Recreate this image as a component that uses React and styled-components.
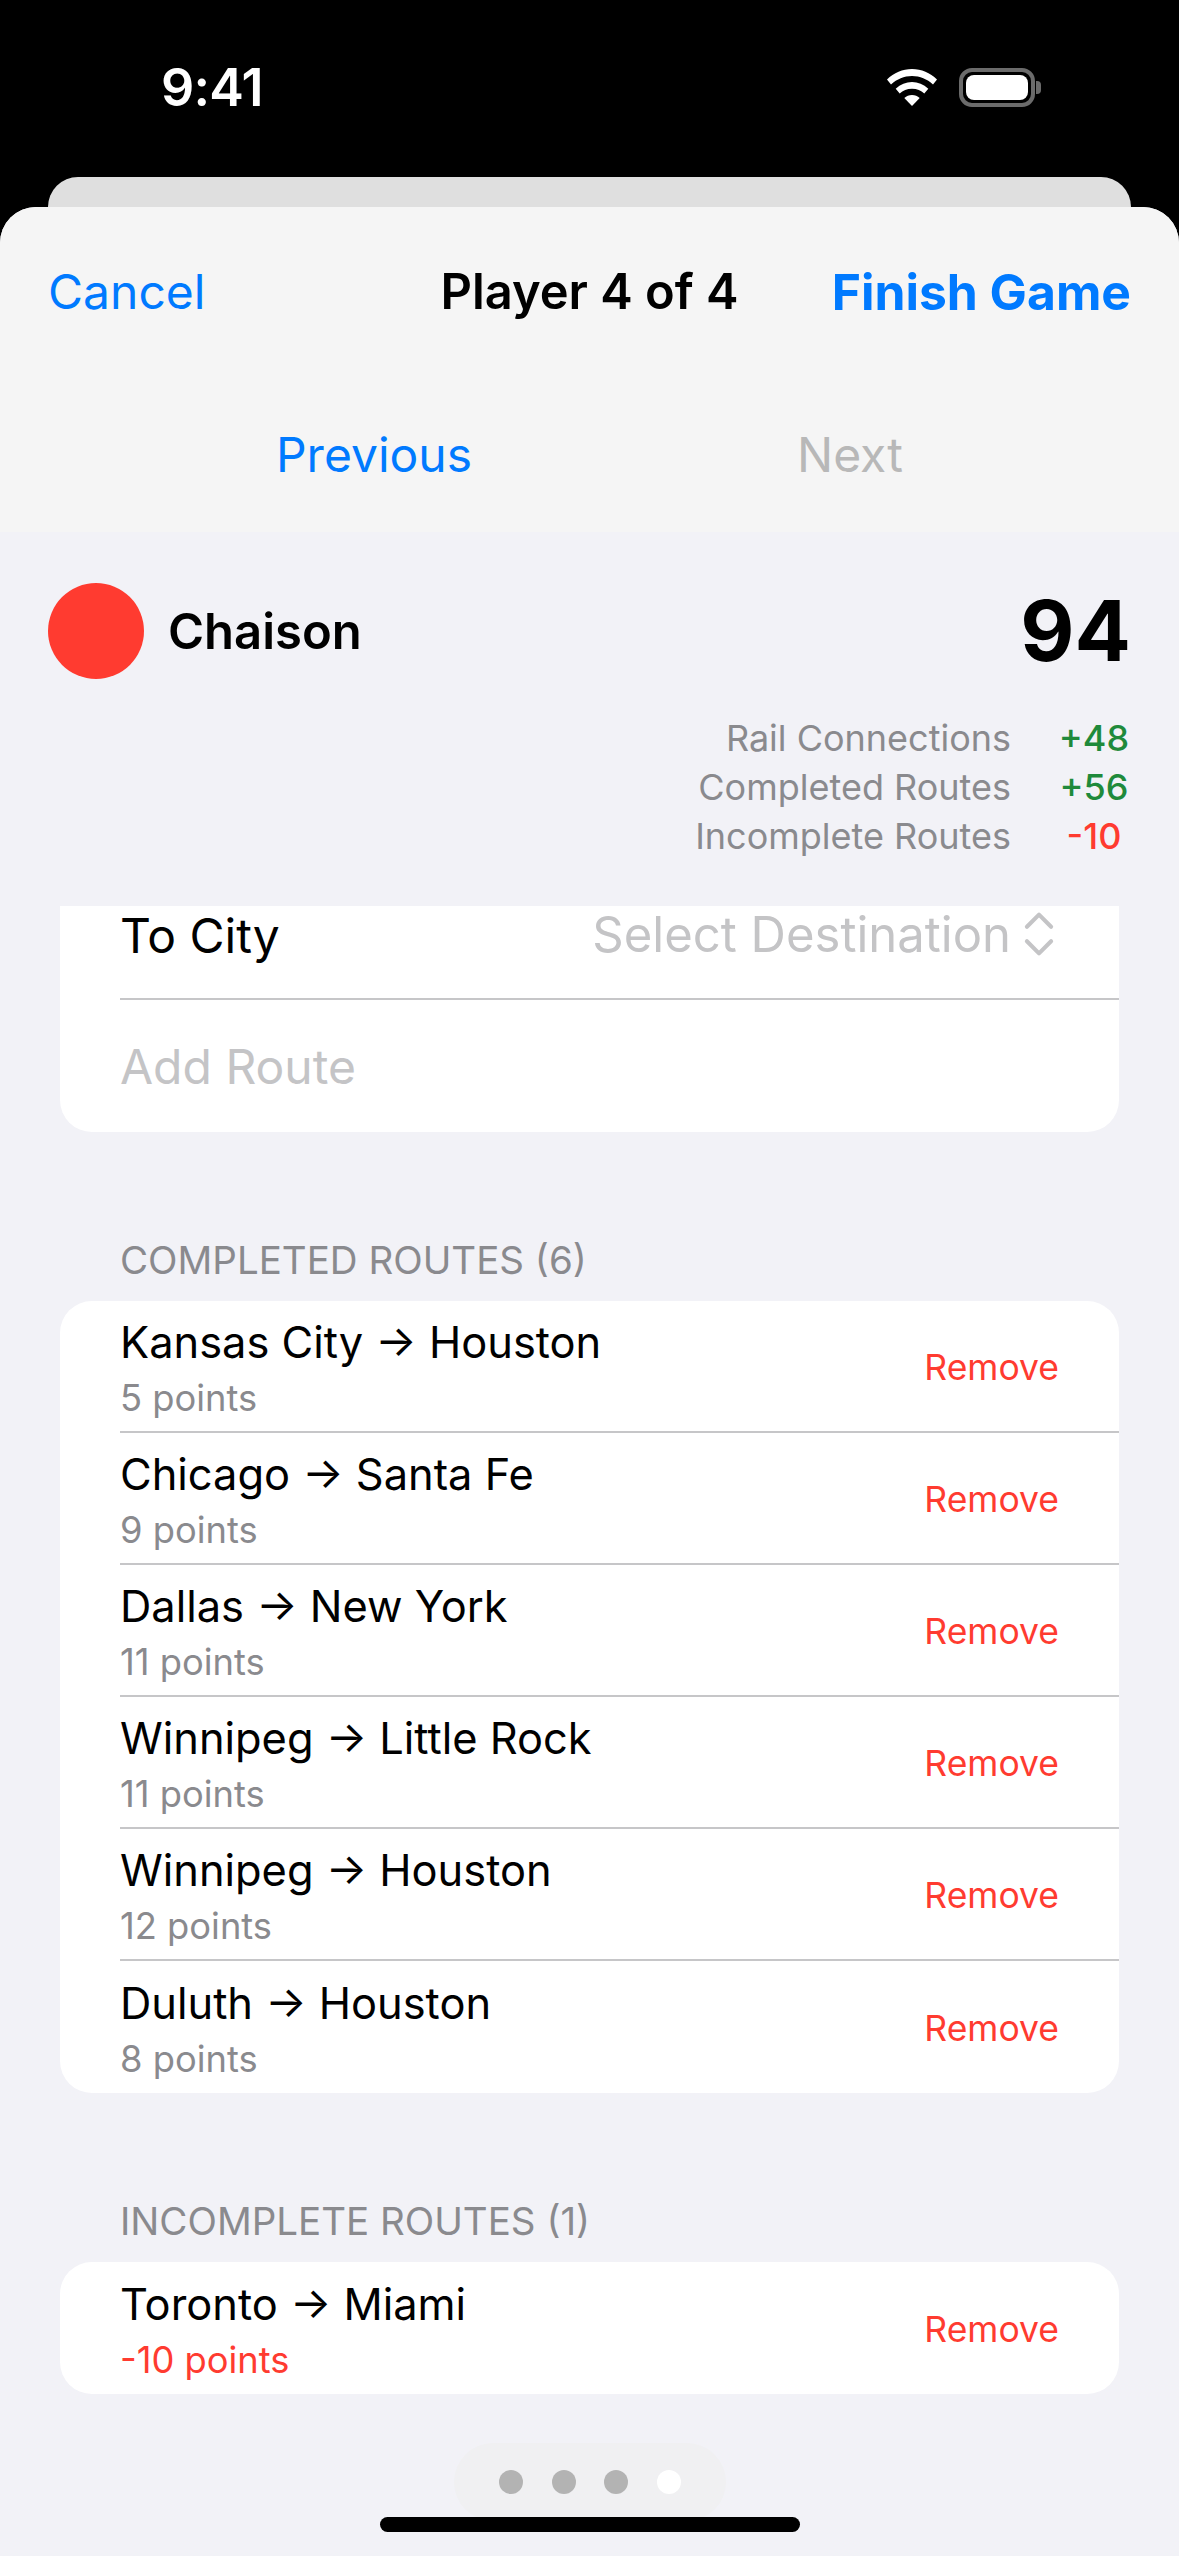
import styled, { createGlobalStyle } from "styled-components";
import { ChevronsUpDown } from "lucide-react";

const completedRoutes = [
  { name: "Kansas City → Houston", points: "5 points" },
  { name: "Chicago → Santa Fe", points: "9 points" },
  { name: "Dallas → New York", points: "11 points" },
  { name: "Winnipeg → Little Rock", points: "11 points" },
  { name: "Winnipeg → Houston", points: "12 points" },
  { name: "Duluth → Houston", points: "8 points" },
];

const scoreLines = [
  { label: "Rail Connections", value: "+48", tone: "#1f8a3b" },
  { label: "Completed Routes", value: "+56", tone: "#1f8a3b" },
  { label: "Incomplete Routes", value: "-10", tone: "#ff3b30" },
];

const App = () => {
  return (
    <>
      <GlobalStyle />
      <Screen>
        <StatusBar>
          <Time>9:41</Time>
          <StatusIcons>
            <svg width="50" height="37" viewBox="0 0 50 37">
              <path fill="#fff" d="M25 0C15.500 0 7 3.600 0 10.500L4 15.500C10 10 17 7 25 7C33 7 40 10 46 15.500L50 10.500C43 3.600 34.500 0 25 0Z" />
              <path fill="#fff" d="M25 13C19 13 13.500 15.300 8.700 19.800L12.700 24.500C16 21.500 20 19.800 25 19.800C30 19.800 34 21.500 37.300 24.500L41.300 19.800C36.500 15.300 31 13 25 13Z" />
              <path fill="#fff" d="M25 26C22 26 19.500 27 17.300 29L25 37L32.700 29C30.500 27 28 26 25 26Z" />
            </svg>
            <Battery>
              <BatteryFill />
              <BatteryCap />
            </Battery>
          </StatusIcons>
        </StatusBar>

        <BackCard />

        <Sheet>
          <SheetHeader>
            <ActionRow>
              <LinkText>Cancel</LinkText>
              <Title>Player 4 of 4</Title>
              <FinishText>Finish Game</FinishText>
            </ActionRow>
            <NavRow>
              <LinkText>Previous</LinkText>
              <LinkText $disabled>Next</LinkText>
            </NavRow>
          </SheetHeader>

          <Summary>
            <PlayerRow>
              <PlayerDot />
              <PlayerName>Chaison</PlayerName>
              <Score>94</Score>
            </PlayerRow>
            <ScoreTable>
              {scoreLines.map((line) => (
                <ScoreLine key={line.label}>
                  <ScoreLabel>{line.label}</ScoreLabel>
                  <ScoreValue $tone={line.tone}>{line.value}</ScoreValue>
                </ScoreLine>
              ))}
            </ScoreTable>
          </Summary>

          <ListArea>
            <FormCard>
              <CityRow>
                <CityLabel>To City</CityLabel>
                <CityPicker>
                  Select Destination
                  <PickerIcon size={58} strokeWidth={1.7} color="#c4c4c6" />
                </CityPicker>
              </CityRow>
              <AddRow>Add Route</AddRow>
            </FormCard>

            <SectionTitle>COMPLETED ROUTES (6)</SectionTitle>
            <RouteCard>
              {completedRoutes.map((route) => (
                <RouteRow key={route.name}>
                  <div>
                    <RouteName>{route.name}</RouteName>
                    <RoutePoints>{route.points}</RoutePoints>
                  </div>
                  <RemoveButton>Remove</RemoveButton>
                </RouteRow>
              ))}
            </RouteCard>

            <SectionTitle>INCOMPLETE ROUTES (1)</SectionTitle>
            <RouteCard>
              <RouteRow>
                <div>
                  <RouteName>Toronto → Miami</RouteName>
                  <RoutePoints $negative>-10 points</RoutePoints>
                </div>
                <RemoveButton>Remove</RemoveButton>
              </RouteRow>
            </RouteCard>
          </ListArea>

          <PagePill>
            <PageDot />
            <PageDot />
            <PageDot />
            <PageDot $active />
          </PagePill>
          <HomeIndicator />
        </Sheet>
      </Screen>
    </>
  );
};
export default App;

const GlobalStyle = createGlobalStyle`
  html, body {
    margin: 0;
    padding: 0;
    background: #000;
  }

  body {
    font-family: "Inter", "Liberation Sans", sans-serif;
  }
`;

const Screen = styled.div`
  display: flex;
  flex-direction: column;
  width: 1179px;
  height: 2556px;
  overflow: hidden;
  background: #000;
`;

const StatusBar = styled.div`
  display: flex;
  align-items: flex-start;
  justify-content: space-between;
  height: 177px;
  padding: 0 144px 0 161px;
  box-sizing: border-box;
  color: #fff;
`;

const Time = styled.div`
  margin-top: 61px;
  font-size: 52px;
  line-height: 54px;
  font-weight: 600;
  letter-spacing: -0.8px;
`;

const StatusIcons = styled.div`
  display: flex;
  align-items: center;
  gap: 22px;
  margin-top: 68px;
`;

const Battery = styled.div`
  position: relative;
  width: 76px;
  height: 39px;
  box-sizing: border-box;
  border: 4px solid #6b6b6b;
  border-radius: 13px;
  padding: 3px;
`;

const BatteryFill = styled.div`
  width: 100%;
  height: 100%;
  background: #fff;
  border-radius: 8px;
`;

const BatteryCap = styled.div`
  position: absolute;
  right: -10px;
  top: 9px;
  width: 5px;
  height: 13px;
  background: #6b6b6b;
  border-radius: 0 4px 4px 0;
`;

const BackCard = styled.div`
  flex: none;
  height: 30px;
  margin: 0 48px;
  background: #dfdfdf;
  border-radius: 30px 30px 0 0;
`;

const Sheet = styled.div`
  position: relative;
  flex: 1;
  display: flex;
  flex-direction: column;
  background: #f2f2f7;
  border-radius: 36px 36px 0 0;
  overflow: hidden;
`;

const SheetHeader = styled.div`
  flex: none;
  height: 325px;
  background: #f5f5f5;
  box-sizing: border-box;
  padding-top: 55px;
`;

const ActionRow = styled.div`
  display: grid;
  grid-template-columns: 1fr auto 1fr;
  align-items: center;
  height: 60px;
  padding: 0 48px;
`;

const LinkText = styled.div`
  font-size: 48px;
  line-height: 60px;
  color: ${(p) => (p.$disabled ? "#b8b8b8" : "#007aff")};
  text-align: center;

  ${ActionRow} & {
    text-align: left;
  }
`;

const Title = styled.div`
  font-size: 48.8px;
  line-height: 60px;
  font-weight: 600;
  color: #000;
`;

const FinishText = styled.div`
  font-size: 49.8px;
  line-height: 60px;
  font-weight: 700;
  color: #007aff;
  text-align: right;
`;

const NavRow = styled.div`
  display: grid;
  grid-template-columns: 1fr 1fr;
  align-items: center;
  height: 60px;
  margin-top: 103px;
  padding: 0 91px 0 136px;
`;

const Summary = styled.div`
  flex: none;
  height: 374px;
  box-sizing: border-box;
  padding: 51px 45px 0 48px;
`;

const PlayerRow = styled.div`
  display: flex;
  align-items: center;
  gap: 24px;
  height: 96px;
`;

const PlayerDot = styled.div`
  width: 96px;
  height: 96px;
  border-radius: 50%;
  background: #ff3b30;
`;

const PlayerName = styled.div`
  flex: 1;
  font-size: 49px;
  font-weight: 600;
  color: #000;
`;

const Score = styled.div`
  margin-right: 3px;
  font-size: 83.5px;
  line-height: 96px;
  font-weight: 700;
  color: #000;
`;

const ScoreTable = styled.div`
  display: flex;
  flex-direction: column;
  align-items: flex-end;
  margin-top: 34px;
`;

const ScoreLine = styled.div`
  display: flex;
  align-items: center;
  justify-content: flex-end;
  height: 49px;
`;

const ScoreLabel = styled.div`
  font-size: 36px;
  color: #8a8a8e;
`;

const ScoreValue = styled.div`
  width: 80px;
  margin-left: 43px;
  font-size: 36px;
  font-weight: 500;
  text-align: center;
  color: ${(p) => p.$tone};
`;

const ListArea = styled.div`
  flex: 1;
  min-height: 0;
  overflow: hidden;
  padding: 0 60px;
`;

const FormCard = styled.div`
  padding-left: 60px;
  background: #fff;
  border-radius: 0 0 32px 32px;
`;

const CityRow = styled.div`
  display: flex;
  align-items: flex-start;
  justify-content: space-between;
  height: 94px;
  box-sizing: border-box;
  padding-right: 68px;
  border-bottom: 2px solid #c6c6c8;
`;

const CityLabel = styled.div`
  font-size: 48px;
  line-height: 60px;
  color: #000;
`;

const CityPicker = styled.div`
  display: flex;
  align-items: center;
  height: 56px;
  font-size: 49px;
  color: #c4c4c6;
`;

const PickerIcon = styled(ChevronsUpDown)`
  margin: 0 -17px 0 -1px;
`;

const AddRow = styled.div`
  display: flex;
  align-items: center;
  height: 132px;
  font-size: 48px;
  color: #c4c4c6;
`;

const SectionTitle = styled.div`
  margin: 104px 0 0 60px;
  height: 65px;
  font-size: 38.5px;
  line-height: 48px;
  color: #8a8a8e;
`;

const RouteCard = styled.div`
  padding-left: 60px;
  background: #fff;
  border-radius: 32px;
`;

const RouteRow = styled.div`
  display: flex;
  align-items: center;
  justify-content: space-between;
  height: 132px;
  box-sizing: border-box;
  padding: 1px 60px 0 0;
  border-bottom: 2px solid #c6c6c8;

  &:last-child {
    border-bottom: none;
  }
`;

const RouteName = styled.div`
  margin-bottom: 2px;
  font-size: 43.4px;
  line-height: 60px;
  color: #000;
`;

const RoutePoints = styled.div`
  font-size: 36.3px;
  line-height: 48px;
  color: ${(p) => (p.$negative ? "#ff3b30" : "#8a8a8e")};
`;

const RemoveButton = styled.div`
  margin-top: 2px;
  font-size: 35.5px;
  color: #ff3b30;
`;

const PagePill = styled.div`
  position: absolute;
  left: 454px;
  top: 2236px;
  display: flex;
  align-items: center;
  justify-content: space-between;
  width: 272px;
  height: 78px;
  box-sizing: border-box;
  padding: 0 45px;
  border-radius: 39px;
  background: #f0f0f2;
`;

const PageDot = styled.div`
  width: 24px;
  height: 24px;
  border-radius: 50%;
  background: ${(p) => (p.$active ? "#fff" : "#b3b3b3")};
`;

const HomeIndicator = styled.div`
  position: absolute;
  left: 380px;
  top: 2310px;
  width: 420px;
  height: 15px;
  border-radius: 8px;
  background: #000;
`;
